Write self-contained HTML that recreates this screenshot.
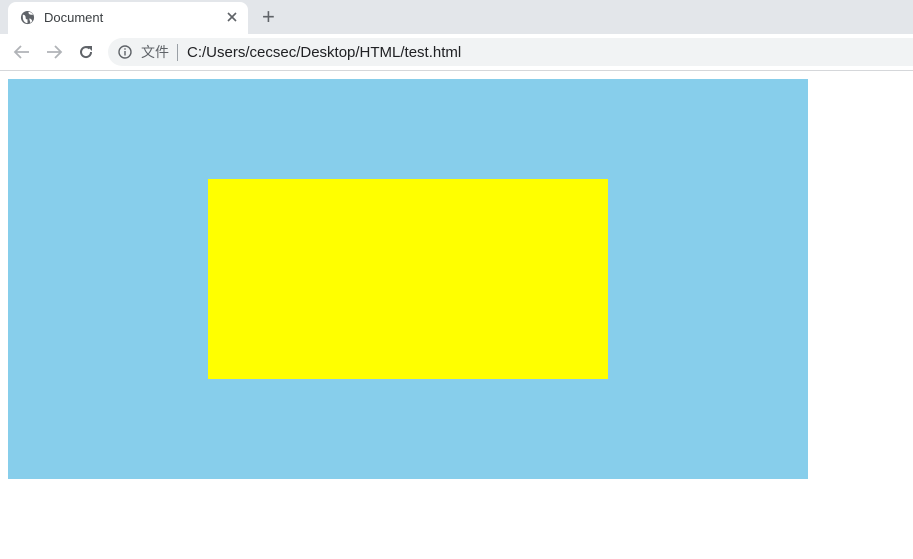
<!DOCTYPE html>
<html><head><style>
body{margin:0;width:913px;height:559px;overflow:hidden;background:#fff;font-family:"Liberation Sans","Noto Sans CJK SC",sans-serif;position:relative}
.a{position:absolute}
</style></head><body>
<div class="a" style="left:0;top:0;width:913px;height:34px;background:#e3e6ea"></div>
<div class="a" style="left:8px;top:2px;width:240px;height:33px;background:#fff;border-radius:8px 8px 0 0"></div>
<svg class="a" style="left:20px;top:10px" width="15" height="15" viewBox="0 0 16 16"><circle cx="8" cy="8" r="7" fill="#5f6368"/><path d="M3 5c2 0 3 1 3 3s1 2 2 2v4c-3 0-5-3-5-6z M9 2c0 2 1 3 3 3h2c-1-2-3-3-5-3z M10 9c1 0 3 1 3 3l-2 2c0-2-1-3-1-5z" fill="#fff"/></svg>
<div class="a" style="left:44px;top:10px;font-size:13px;color:#3c4043">Document</div>
<svg class="a" style="left:227px;top:12px" width="10" height="10" viewBox="0 0 10 10"><path d="M1 1L9 9M9 1L1 9" stroke="#5f6368" stroke-width="1.6"/></svg>
<div class="a" style="left:262px;top:4px;font-size:22px;color:#5f6368">+</div>
<div class="a" style="left:108px;top:38px;width:805px;height:28px;background:#f1f3f4;border-radius:14px 0 0 14px"></div>
<svg class="a" style="left:13px;top:44px" width="18" height="16" viewBox="0 0 18 16"><path d="M16 8H2M8 2L2 8l6 6" fill="none" stroke="#b0b3b7" stroke-width="1.8"/></svg>
<svg class="a" style="left:45px;top:44px" width="18" height="16" viewBox="0 0 18 16"><path d="M2 8h14M10 2l6 6-6 6" fill="none" stroke="#b0b3b7" stroke-width="1.8"/></svg>
<svg class="a" style="left:78px;top:44px" width="16" height="16" viewBox="0 0 16 16"><path d="M13 8a5 5 0 1 1-1.5-3.5" fill="none" stroke="#5f6368" stroke-width="2"/><path d="M9 2h5v5z" fill="#5f6368"/></svg>
<svg class="a" style="left:118px;top:45px" width="14" height="14" viewBox="0 0 14 14"><circle cx="7" cy="7" r="6" fill="none" stroke="#5f6368" stroke-width="1.4"/><rect x="6.3" y="6" width="1.4" height="4.5" fill="#5f6368"/><rect x="6.3" y="3.3" width="1.4" height="1.4" fill="#5f6368"/></svg>
<div class="a" style="left:141px;top:42px;font-size:14px;color:#5f6368">文件</div>
<div class="a" style="left:177px;top:44px;width:1px;height:17px;background:#9aa0a6"></div>
<div class="a" style="left:187px;top:44px;font-size:15px;color:#202124">C:/Users/cecsec/Desktop/HTML/test.html</div>
<div class="a" style="left:0;top:70px;width:913px;height:1px;background:#d5d7da"></div>
<div class="a" style="left:8px;top:79px;width:800px;height:400px;background:#87ceeb"></div>
<div class="a" style="left:208px;top:179px;width:400px;height:200px;background:#ffff00"></div>
</body></html>
